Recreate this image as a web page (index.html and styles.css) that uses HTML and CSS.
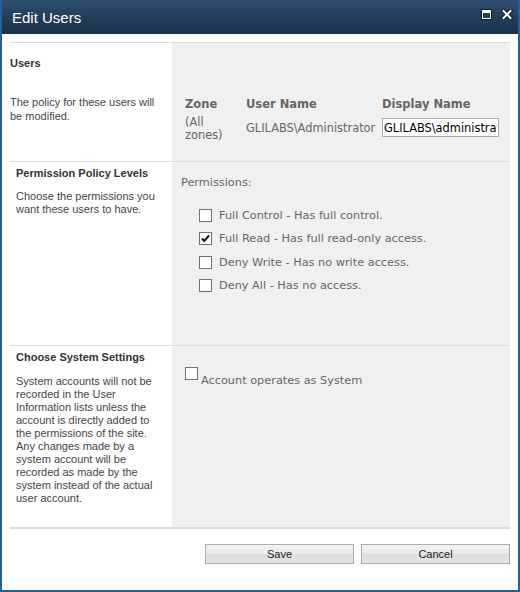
FILE: index.html
```html
<!DOCTYPE html>
<html>
<head>
<meta charset="utf-8">
<title>Edit Users</title>
<link rel="stylesheet" href="styles.css">
</head>
<body>
<div class="window">
  <div class="titlebar">
    <span class="title">Edit Users</span>
    <div class="controls">
      <svg class="ico-max" width="11" height="11" viewBox="0 0 11 11">
        <rect x="0.5" y="0.5" width="10" height="10" fill="none" stroke="#0e1c2b"/>
        <rect x="1.5" y="1.5" width="8" height="8" fill="none" stroke="#ffffff"/>
        <rect x="2" y="2" width="7" height="2" fill="#ffffff"/>
      </svg>
      <svg class="ico-close" width="12" height="11" viewBox="0 0 12 11">
        <path d="M2.5 2 L9.5 9 M9.5 2 L2.5 9" stroke="#0e1c2b" stroke-width="4" stroke-linecap="square"/>
        <path d="M2.5 2 L9.5 9 M9.5 2 L2.5 9" stroke="#ffffff" stroke-width="2" stroke-linecap="square"/>
      </svg>
    </div>
  </div>

  <div class="body">
    <div class="form">
      <section class="row row-users">
        <div class="label-col">
          <h3 class="sec-title">Users</h3>
          <p class="desc desc-users">The policy for these users will<br>be modified.</p>
        </div>
        <div class="field-col">
          <div class="user-table">
            <div class="th">Zone</div>
            <div class="th">User Name</div>
            <div class="th">Display Name</div>
            <div class="td td-zone">(All<br>zones)</div>
            <div class="td td-user">GLILABS\Administrator</div>
            <div class="td td-input"><input class="text-input" type="text" value="GLILABS\administrator"></div>
          </div>
        </div>
      </section>

      <section class="row row-perm">
        <div class="label-col">
          <h3 class="sec-title">Permission Policy Levels</h3>
          <p class="desc">Choose the permissions you<br>want these users to have.</p>
        </div>
        <div class="field-col">
          <div class="perm-caption">Permissions:</div>
          <ul class="perm-list">
            <li class="perm-item"><span class="cbox"></span><span class="perm-label">Full Control - Has full control.</span></li>
            <li class="perm-item"><span class="cbox checked"><svg width="11" height="11" viewBox="0 0 11 11"><path d="M2 5.5 L4.3 8 L9 2.5" fill="none" stroke="#111" stroke-width="2"/></svg></span><span class="perm-label">Full Read - Has full read-only access.</span></li>
            <li class="perm-item"><span class="cbox"></span><span class="perm-label">Deny Write - Has no write access.</span></li>
            <li class="perm-item"><span class="cbox"></span><span class="perm-label">Deny All - Has no access.</span></li>
          </ul>
        </div>
      </section>

      <section class="row row-system">
        <div class="label-col">
          <h3 class="sec-title">Choose System Settings</h3>
          <p class="desc">System accounts will not be<br>recorded in the User<br>Information lists unless the<br>account is directly added to<br>the permissions of the site.<br>Any changes made by a<br>system account will be<br>recorded as made by the<br>system instead of the actual<br>user account.</p>
        </div>
        <div class="field-col">
          <div class="system-option"><span class="cbox"></span><span class="system-label">Account operates as System</span></div>
        </div>
      </section>
    </div>

    <div class="buttons">
      <button class="btn" type="button">Save</button>
      <button class="btn" type="button">Cancel</button>
    </div>
  </div>
</div>
</body>
</html>
```

FILE: styles.css
```css
html, body {
  margin: 0;
  padding: 0;
  background: #ffffff;
}

.window {
  width: 520px;
  height: 592px;
  box-sizing: border-box;
  border: 2px solid #22609e;
  border-top: 0;
  background: #ffffff;
  display: flex;
  flex-direction: column;
}

.titlebar {
  height: 34px;
  flex: none;
  display: flex;
  justify-content: space-between;
  align-items: center;
  padding: 0 5px 0 10px;
  background: linear-gradient(to bottom, #304f70 0%, #243f5c 45%, #1b314b 100%);
}

.title {
  font-family: "Liberation Sans", Arial, sans-serif;
  font-size: 15px;
  color: #ffffff;
}

.controls {
  align-self: flex-start;
  margin-top: 8px;
  display: flex;
  align-items: flex-start;
  gap: 9px;
}

.ico-max {
  margin-top: 1px;
  display: block;
}

.ico-close {
  display: block;
  margin-top: 1px;
}

.body {
  flex: 1;
  padding: 8px 8px 0;
}

.form {
  border-top: 1px solid #dcdcdc;
  border-bottom: 2px solid #dcdcdc;
}

.row {
  display: grid;
  grid-template-columns: 162px 1fr;
}

.row-users {
  height: 118px;
  border-bottom: 1px solid #dcdcdc;
}

.row-perm {
  height: 183px;
  border-bottom: 1px solid #dcdcdc;
}

.row-system {
  height: 181px;
}

.field-col {
  background: #f0f0f0;
}

.sec-title {
  margin: 0;
  font-family: "Liberation Sans", Arial, sans-serif;
  font-size: 11px;
  font-weight: bold;
  line-height: 13px;
  color: #333333;
}

.desc {
  margin: 11px 0 0;
  font-family: "Liberation Sans", Arial, sans-serif;
  font-size: 11px;
  line-height: 13px;
  color: #444444;
}

/* Users row */
.row-users .label-col {
  padding: 14px 0 0 0;
}

.desc-users {
  margin-top: 25px;
  line-height: 14px;
}

.row-users .field-col {
  padding: 54px 0 0 13px;
}

.user-table {
  display: grid;
  grid-template-columns: 61px 136px 117px;
  row-gap: 4px;
  font-family: "DejaVu Sans", Verdana, sans-serif;
  font-size: 11.4px;
  color: #666666;
}

.th {
  font-weight: bold;
  font-size: 11.5px;
  line-height: 15px;
}

.td-zone {
  line-height: 13px;
}

.td-user {
  padding-top: 5px;
  line-height: 15px;
  white-space: nowrap;
}

.td-input {
  padding-top: 2px;
}

.text-input {
  display: block;
  width: 117px;
  height: 19px;
  box-sizing: border-box;
  margin: 0;
  padding: 0 1px;
  border: 1px solid #a9a9a9;
  background: #ffffff;
  font-family: "DejaVu Sans", Verdana, sans-serif;
  font-size: 11.4px;
  color: #000000;
  outline: none;
}

/* Permission row */
.row-perm .label-col,
.row-system .label-col {
  padding: 5px 0 0 6px;
}

.row-perm .desc {
  margin-top: 10px;
}

.row-perm .field-col {
  padding: 13px 0 0 9px;
  font-family: "DejaVu Sans", Verdana, sans-serif;
  font-size: 11.3px;
  color: #666666;
}

.perm-caption {
  line-height: 16px;
}

.perm-list {
  list-style: none;
  margin: 13px 0 0;
  padding: 0 0 0 18px;
}

.perm-item {
  height: 23.33px;
  display: flex;
  align-items: center;
  gap: 7px;
}

.perm-label {
  line-height: 15px;
  color: #666666;
}

.cbox {
  width: 13px;
  height: 13px;
  box-sizing: border-box;
  border: 1px solid #707070;
  background: #ffffff;
  flex: none;
  display: flex;
  align-items: center;
  justify-content: center;
}

.cbox svg {
  display: block;
}

/* System row */
.row-system .field-col {
  padding: 21px 0 0 13px;
}

.system-option {
  display: flex;
  align-items: flex-start;
}

.system-label {
  margin: 6px 0 0 3px;
  font-family: "DejaVu Sans", Verdana, sans-serif;
  font-size: 11.3px;
  line-height: 15px;
  color: #666666;
}

/* Buttons */
.buttons {
  display: flex;
  justify-content: flex-end;
  gap: 7px;
  margin-top: 15px;
}

.btn {
  width: 149px;
  height: 20px;
  box-sizing: border-box;
  margin: 0;
  padding: 0;
  border: 1px solid #acacac;
  border-radius: 0;
  background: linear-gradient(to bottom, #f2f2f2 0%, #ebebeb 50%, #dddddd 51%, #e5e5e5 100%);
  font-family: "Liberation Sans", Arial, sans-serif;
  font-size: 11px;
  color: #1a1a1a;
}
```
